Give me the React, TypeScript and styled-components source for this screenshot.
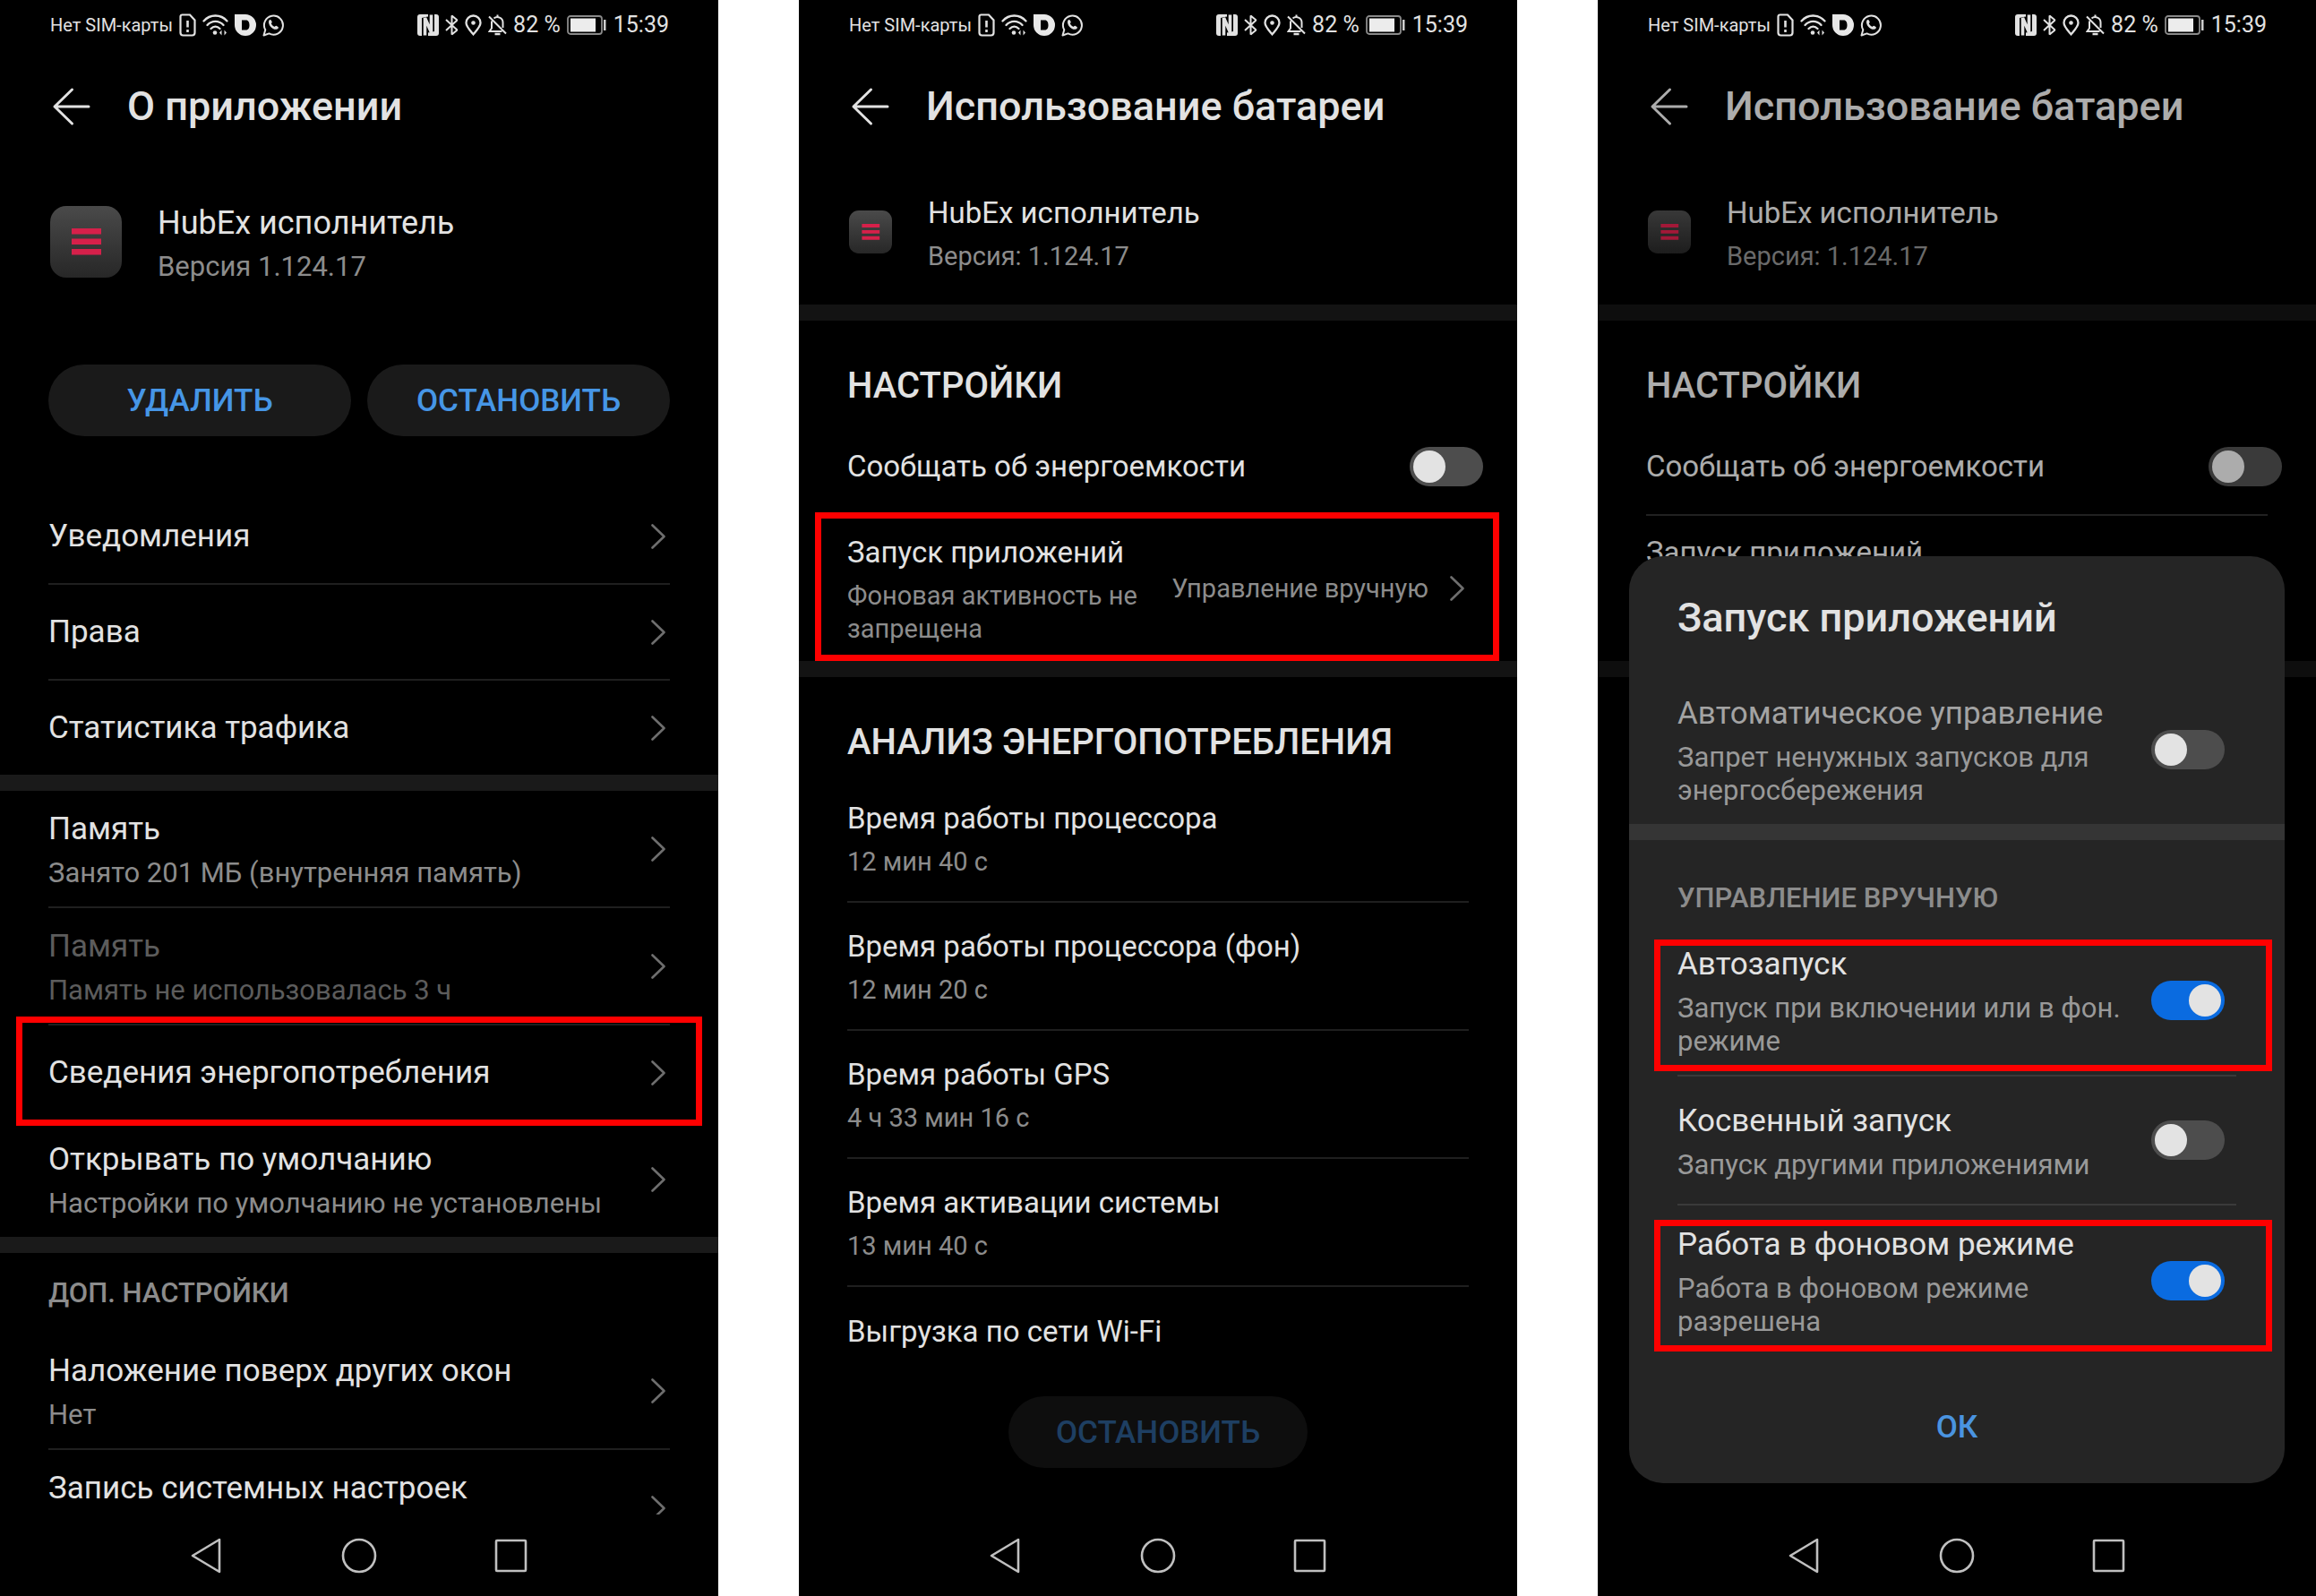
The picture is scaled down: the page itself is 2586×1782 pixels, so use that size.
import React from 'react';
import styled, { createGlobalStyle, css } from 'styled-components';

const GlobalStyle = createGlobalStyle`
  * { box-sizing: border-box; }
  body { margin: 0; background: #fff; font-family: Roboto, "Liberation Sans", sans-serif; }
  h1, h2, p { margin: 0; font-weight: 500; }
  button { margin: 0; border: 0; background: none; font: inherit; color: inherit; text-align: left; cursor: pointer; }
  svg { display: block; flex: none; }
`;

/* ---------- layout ---------- */

const Board = styled.main`
  display: grid;
  grid-template-columns: repeat(3, minmax(0, 1fr));
  gap: 90px;
`;

const PhoneFrame = styled.section`
  position: relative;
  display: flex;
  flex-direction: column;
  height: 100vh;
  overflow: hidden;
  background: #000;
  color: #e2e2e2;
`;

const Content = styled.div<{ $dim?: boolean }>`
  flex: 1;
  min-height: 0;
  overflow: hidden;
  opacity: ${p => (p.$dim ? 0.76 : 1)};
`;

/* ---------- status bar ---------- */

const StatusBar = styled.header`
  flex: none;
  display: flex;
  justify-content: space-between;
  align-items: center;
  height: 56px;
  padding: 0 55px 0 56px;
`;

const StatusGroup = styled.div`
  display: flex;
  align-items: center;
  gap: 7px;
`;

const Carrier = styled.span`
  font-size: 20px;
  line-height: 28px;
`;

const StatusText = styled.span`
  font-size: 25px;
  line-height: 28px;
`;

/* ---------- navigation bar ---------- */

const NavBar = styled.nav`
  flex: none;
  display: flex;
  justify-content: center;
  align-items: center;
  gap: 130px;
  height: 91px;
`;

const NavButton = styled.button`
  padding: 0;
`;

/* ---------- title, app header ---------- */

const TitleBar = styled.div`
  display: flex;
  align-items: center;
  gap: 40px;
  height: 126px;
  padding: 0 58px;
`;

const IconButton = styled.button`
  padding: 0;
`;

const Title = styled.h1`
  font-size: 45px;
  line-height: 52px;
`;

const AppHeader = styled.div<{ $large?: boolean }>`
  display: flex;
  align-items: center;
  gap: 40px;
  height: ${p => (p.$large ? 180 : 158)}px;
  padding: 0 56px 4px;
`;

const Actions = styled.div`
  display: flex;
  gap: 18px;
  padding: 45px 54px 59px;
`;

const Footer = styled.div`
  flex: none;
  display: flex;
  justify-content: center;
  padding: 0 234px 52px;
`;

const PillButton = styled.button`
  flex: 1;
  height: 80px;
  border-radius: 40px;
  background: #1a1a1a;
  color: #4696e6;
  font-size: 35px;
  font-weight: 500;
  text-align: center;

  &:disabled {
    background: #0e0e0e;
    color: #1e3f62;
  }
`;

/* ---------- list ---------- */

const rowBase = css<{ $height: number }>`
  position: relative;
  display: flex;
  align-items: center;
  gap: 24px;
  width: 100%;
  min-height: ${p => p.$height}px;
`;

const LinkRow = styled.button<{ $height: number }>`
  ${rowBase}
  padding: 0 59px 0 54px;
`;

const InfoRow = styled.div<{ $height: number }>`
  ${rowBase}
  padding: 0 54px;
`;

const SwitchRow = styled.label<{ $height: number; $inDialog?: boolean }>`
  ${rowBase}
  padding: 0 ${p => (p.$inDialog ? 67 : 38)}px 0 54px;
`;

const TextBlock = styled.span<{ $padded?: boolean }>`
  flex: 1;
  min-width: 0;
  display: flex;
  flex-direction: column;
  gap: 10px;
  padding-top: ${p => (p.$padded ? 4 : 0)}px;
`;

const Label = styled.span<{ $size?: number; $tone?: string }>`
  font-size: ${p => p.$size ?? 33}px;
  line-height: 40px;
  color: ${p => p.$tone ?? '#e2e2e2'};
`;

const Sub = styled.span<{ $size?: number; $tone?: string }>`
  font-size: ${p => p.$size ?? 29}px;
  line-height: 37px;
  color: ${p => p.$tone ?? '#8c8c8c'};
`;

const Value = styled.span`
  font-size: 29px;
  line-height: 37px;
  white-space: nowrap;
  color: #8c8c8c;
`;

const Divider = styled.div<{ $tone?: string }>`
  height: 2px;
  margin: 0 54px;
  background: ${p => p.$tone ?? '#1f1f1f'};
`;

const Band = styled.div<{ $tone?: string }>`
  height: 18px;
  background: ${p => p.$tone ?? '#1a1a1a'};
`;

const SectionTitle = styled.h2`
  display: flex;
  align-items: center;
  height: 109px;
  padding: 36px 54px 0;
  font-size: 40px;
  line-height: 46px;
`;

const Caption = styled.h2<{ $height: number; $top?: number }>`
  display: flex;
  align-items: center;
  height: ${p => p.$height}px;
  padding: ${p => p.$top ?? 0}px 54px 0;
  font-size: 31px;
  line-height: 37px;
  color: #8c8c8c;
`;

const Highlight = styled.span<{ $inset: string }>`
  position: absolute;
  z-index: 1;
  inset: ${p => p.$inset};
  border: 7px solid #fe0000;
  pointer-events: none;
`;

const Switch = styled.input`
  appearance: none;
  flex: none;
  display: flex;
  width: 82px;
  height: 44px;
  margin: 0;
  padding: 4px;
  border-radius: 22px;
  background: #4d4d4d;

  &::before {
    content: '';
    width: 36px;
    height: 36px;
    border-radius: 50%;
    background: #e3e3e3;
  }

  &:checked {
    justify-content: flex-end;
    background: #0a6be0;
  }
`;

/* ---------- dialog ---------- */

const Dialog = styled.div`
  position: absolute;
  left: 35px;
  right: 35px;
  bottom: 126px;
  border-radius: 38px;
  background: #252525;
`;

const DialogTitle = styled.h2`
  display: flex;
  align-items: center;
  height: 132px;
  padding: 6px 54px 0;
  font-size: 45px;
  line-height: 52px;
`;

const DialogFooter = styled.div`
  display: flex;
  justify-content: center;
  align-items: center;
  height: 143px;
  padding-top: 18px;
`;

const TextButton = styled.button`
  padding: 8px 24px;
  font-size: 35px;
  font-weight: 500;
  line-height: 40px;
  color: #4a94e0;
`;

/* ---------- drawings ---------- */

const Chevron = () => (
  <svg width="16" height="28" viewBox="0 0 16 28" fill="none" stroke="#6e6e6e" strokeWidth="2.6" strokeLinecap="round" strokeLinejoin="round">
    <path d="M1.5 1.5 14.5 14 1.5 26.5" />
  </svg>
);

const BackArrow = () => (
  <svg width="44" height="44" viewBox="0 0 44 44" fill="none" stroke="#e2e2e2" strokeWidth="3" strokeLinecap="round" strokeLinejoin="round">
    <path d="M22.500 3 3 22l19.500 19M3 22h38" />
  </svg>
);

const AppIcon = ({ size }: { size: number }) => (
  <svg width={size} height={size} viewBox="0 0 80 80">
    <defs>
      <linearGradient id="tile" x1="0" y1="0" x2="0" y2="1">
        <stop offset="0" stopColor="#4a4a4a" />
        <stop offset="1" stopColor="#272727" />
      </linearGradient>
    </defs>
    <rect width="80" height="80" rx="18" fill="url(#tile)" />
    <path d="M24 25h33v6.500H24zM24 36.500h33V43H24zM24 48h33v6.500H24z" fill="#d6204a" />
  </svg>
);

const SimIcon = () => (
  <svg width="19" height="26" viewBox="0 0 19 26" fill="none" stroke="#e2e2e2" strokeWidth="2.2">
    <path d="M3.500 1.500H12l5.500 6v14a3 3 0 0 1-3 3h-10a3 3 0 0 1-3-3v-18a2 2 0 0 1 2-2z" />
    <path d="M9.500 8v7.500M9.500 18v3" strokeWidth="2.600" />
  </svg>
);

const WifiIcon = () => (
  <svg width="29" height="26" viewBox="0 0 29 26" fill="none" stroke="#e2e2e2" strokeWidth="2.300" strokeLinecap="round">
    <path d="M1.500 8.500C8.500.5 20.500.5 27.500 8.500M5.500 13c5-5.500 13-5.500 18 0M9.500 17c3-3 7-3 10 0" />
    <circle cx="14" cy="21.500" r="2.300" fill="#e2e2e2" stroke="none" />
    <path d="m21.500 18.500-2.500 3 2.500 3zM24.500 18.500l2.500 3-2.500 3z" fill="#e2e2e2" stroke="none" />
  </svg>
);

const BadgeIcon = () => (
  <svg width="24" height="24" viewBox="0 0 24 24">
    <path fillRule="evenodd" fill="#e8e8e8" d="M0 0h12a12 12 0 0 1 12 12 12 12 0 0 1-12 12A12 12 0 0 1 0 12zM8 6.500v11h4.500c3 0 4-2.500 4-5.500s-1-5.500-4-5.500z" />
  </svg>
);

const ChatIcon = () => (
  <svg width="24" height="26" viewBox="0 0 24 26">
    <path d="M1.500 24.500l1.800-6.200a10.500 10.500 0 1 1 4.200 4.100z" fill="none" stroke="#e2e2e2" strokeWidth="2" strokeLinejoin="round" />
    <path d="M7.200 8.200c.7-1.300 1.900-1.500 2.500-.6l1 2c.3.800-.9 1.500-.8 2 .8 1.500 2 2.600 3.500 3.200.6.200 1.300-1.300 2-1l2.100 1.100c.8.600.1 2.200-1.100 2.700-4.300 1.500-10.600-4.600-9.200-9.400z" fill="#e2e2e2" />
  </svg>
);

const NfcIcon = () => (
  <svg width="24" height="24" viewBox="0 0 24 24" fill="none">
    <rect width="24" height="24" rx="3" fill="#e2e2e2" />
    <path d="M8.500 26V4l7 15V-2" stroke="#000" strokeWidth="7" />
    <path d="M8.500 23.500V4l7 16V.5" stroke="#e2e2e2" strokeWidth="3.600" />
  </svg>
);

const BluetoothIcon = () => (
  <svg width="15" height="24" viewBox="0 0 15 24" fill="none" stroke="#e2e2e2" strokeWidth="2" strokeLinejoin="bevel">
    <path d="M1 6 13.500 17.500l-6 5V1.500l6 5L1 18" />
  </svg>
);

const PinIcon = () => (
  <svg width="19" height="24" viewBox="0 0 19 24">
    <path d="M9.500 22.300C5 17 1.500 13.500 1.500 9.500a8 8 0 0 1 16 0c0 4-3.500 7.500-8 12.800z" fill="none" stroke="#e2e2e2" strokeWidth="2.300" />
    <circle cx="9.500" cy="9.500" r="2.300" fill="#e2e2e2" />
  </svg>
);

const BellOffIcon = () => (
  <svg width="21" height="24" viewBox="0 0 21 24" fill="none" stroke="#e2e2e2" strokeWidth="2">
    <path d="M1 2.500 20 21.500M4 7.500v8L1.500 19h14M6.500 4.500C10 1.500 16.500 3.500 16.500 9v6M10.500 3V.5" />
    <path d="M7.500 22h6" strokeWidth="2.500" />
  </svg>
);

const BatteryIcon = () => (
  <svg width="45" height="22" viewBox="0 0 45 22">
    <rect x="1" y="1" width="38" height="20" rx="3" fill="none" stroke="#8a8a8a" strokeWidth="1.800" />
    <rect x="4" y="3.500" width="28" height="15" fill="#ececec" />
    <rect x="41" y="5" width="2.500" height="12" fill="#cfcfcf" />
  </svg>
);

const navStroke = { fill: 'none', stroke: '#c0c0c0', strokeWidth: 2.6, strokeLinejoin: 'round' as const };

/* ---------- shared pieces ---------- */

const PhoneStatus = () => (
  <StatusBar>
    <StatusGroup>
      <Carrier>Нет SIM-карты</Carrier>
      <SimIcon />
      <WifiIcon />
      <BadgeIcon />
      <ChatIcon />
    </StatusGroup>
    <StatusGroup>
      <NfcIcon />
      <BluetoothIcon />
      <PinIcon />
      <BellOffIcon />
      <StatusText>82 %</StatusText>
      <BatteryIcon />
      <StatusText>15:39</StatusText>
    </StatusGroup>
  </StatusBar>
);

const PhoneNav = () => (
  <NavBar>
    <NavButton aria-label="Назад">
      <svg width="40" height="40" viewBox="0 0 40 40" {...navStroke}><path d="M34 2v36L4 20z" /></svg>
    </NavButton>
    <NavButton aria-label="Главный экран">
      <svg width="40" height="40" viewBox="0 0 40 40" {...navStroke}><circle cx="20" cy="20" r="18" /></svg>
    </NavButton>
    <NavButton aria-label="Недавние">
      <svg width="40" height="40" viewBox="0 0 40 40" {...navStroke}><rect x="3" y="3" width="33" height="34" rx="1" /></svg>
    </NavButton>
  </NavBar>
);

const Header = ({ children }: { children: string }) => (
  <TitleBar>
    <IconButton aria-label="Назад"><BackArrow /></IconButton>
    <Title>{children}</Title>
  </TitleBar>
);

type LinkItemProps = { label: string; sub?: string; muted?: boolean; value?: string; height?: number; highlight?: string; compact?: boolean };

const LinkItem = ({ label, sub, muted, value, height, highlight, compact }: LinkItemProps) => (
  <LinkRow $height={height ?? (sub ? 129 : 105)}>
    <TextBlock $padded={!!sub}>
      <Label $size={compact ? 33 : 35} $tone={muted ? '#5c5c5c' : undefined}>{label}</Label>
      {sub && <Sub $size={compact ? 29 : 31} $tone={muted ? '#5c5c5c' : undefined}>{sub}</Sub>}
    </TextBlock>
    {value && <Value>{value}</Value>}
    <Chevron />
    {highlight && <Highlight $inset={highlight} />}
  </LinkRow>
);

type SwitchItemProps = { label: string; sub?: string; height: number; on?: boolean; muted?: boolean; inDialog?: boolean; highlight?: string };

const SwitchItem = ({ label, sub, height, on, muted, inDialog, highlight }: SwitchItemProps) => (
  <SwitchRow $height={height} $inDialog={inDialog}>
    <TextBlock $padded={!!sub}>
      <Label $size={inDialog ? 35 : 33} $tone={muted ? '#a3a3a3' : undefined}>{label}</Label>
      {sub && <Sub $size={31} $tone="#999">{sub}</Sub>}
    </TextBlock>
    <Switch type="checkbox" role="switch" defaultChecked={on} />
    {highlight && <Highlight $inset={highlight} />}
  </SwitchRow>
);

const BatteryTop = ({ highlight }: { highlight?: string }) => (
  <>
    <Header>Использование батареи</Header>
    <AppHeader>
      <AppIcon size={48} />
      <TextBlock $padded>
        <Label>HubEx исполнитель</Label>
        <Sub>Версия: 1.124.17</Sub>
      </TextBlock>
    </AppHeader>
    <Band $tone="#131313" />
    <SectionTitle>НАСТРОЙКИ</SectionTitle>
    <SwitchItem label="Сообщать об энергоемкости" height={107} />
    <Divider $tone="#2c2c2c" />
    <LinkItem
      compact
      label="Запуск приложений"
      sub="Фоновая активность не запрещена"
      value="Управление вручную"
      height={162}
      highlight={highlight}
    />
    <Band $tone="#131313" />
  </>
);

const usage = [
  ['Время работы процессора', '12 мин 40 с'],
  ['Время работы процессора (фон)', '12 мин 20 с'],
  ['Время работы GPS', '4 ч 33 мин 16 с'],
  ['Время активации системы', '13 мин 40 с'],
];

/* ---------- screens ---------- */

const AboutScreen = () => (
  <PhoneFrame>
    <PhoneStatus />
    <Content>
      <Header>О приложении</Header>
      <AppHeader $large>
        <AppIcon size={80} />
        <TextBlock $padded>
          <Label $size={36}>HubEx исполнитель</Label>
          <Sub $size={31}>Версия 1.124.17</Sub>
        </TextBlock>
      </AppHeader>
      <Actions>
        <PillButton>УДАЛИТЬ</PillButton>
        <PillButton>ОСТАНОВИТЬ</PillButton>
      </Actions>
      <LinkItem label="Уведомления" />
      <Divider />
      <LinkItem label="Права" />
      <Divider />
      <LinkItem label="Статистика трафика" />
      <Band />
      <LinkItem label="Память" sub="Занято 201 МБ (внутренняя память)" />
      <Divider />
      <LinkItem label="Память" sub="Память не использовалась 3 ч" muted />
      <Divider />
      <LinkItem label="Сведения энергопотребления" highlight="-10px 18px -7px 18px" />
      <Divider />
      <LinkItem label="Открывать по умолчанию" sub="Настройки по умолчанию не установлены" />
      <Band />
      <Caption $height={89}>ДОП. НАСТРОЙКИ</Caption>
      <LinkItem label="Наложение поверх других окон" sub="Нет" />
      <Divider />
      <LinkItem label="Запись системных настроек" sub={'\u00a0'} />
    </Content>
    <PhoneNav />
  </PhoneFrame>
);

const BatteryScreen = () => (
  <PhoneFrame>
    <PhoneStatus />
    <Content>
      <BatteryTop highlight="-4px 20px 0 18px" />
      <SectionTitle>АНАЛИЗ ЭНЕРГОПОТРЕБЛЕНИЯ</SectionTitle>
      {usage.map(([label, time]) => (
        <React.Fragment key={label}>
          <InfoRow $height={141}>
            <TextBlock $padded>
              <Label>{label}</Label>
              <Sub>{time}</Sub>
            </TextBlock>
          </InfoRow>
          <Divider />
        </React.Fragment>
      ))}
      <InfoRow $height={99}>
        <TextBlock><Label>Выгрузка по сети Wi-Fi</Label></TextBlock>
      </InfoRow>
    </Content>
    <Footer>
      <PillButton disabled>ОСТАНОВИТЬ</PillButton>
    </Footer>
    <PhoneNav />
  </PhoneFrame>
);

const LaunchScreen = () => (
  <PhoneFrame>
    <PhoneStatus />
    <Content $dim inert>
      <BatteryTop />
    </Content>
    <PhoneNav />
    <Dialog role="dialog" aria-label="Запуск приложений">
      <DialogTitle>Запуск приложений</DialogTitle>
      <SwitchItem inDialog muted height={167} label="Автоматическое управление" sub="Запрет ненужных запусков для энергосбережения" />
      <Band $tone="#353535" />
      <Caption $height={95} $top={34}>УПРАВЛЕНИЕ ВРУЧНУЮ</Caption>
      <SwitchItem inDialog on height={167} label="Автозапуск" sub="Запуск при включении или в фон. режиме" highlight="16px 14px 4px 28px" />
      <Divider $tone="#3a3a3a" />
      <SwitchItem inDialog height={142} label="Косвенный запуск" sub="Запуск другими приложениями" />
      <Divider $tone="#3a3a3a" />
      <SwitchItem inDialog on height={167} label="Работа в фоновом режиме" sub="Работа в фоновом режиме разрешена" highlight="16px 14px 4px 28px" />
      <DialogFooter>
        <TextButton>ОК</TextButton>
      </DialogFooter>
    </Dialog>
  </PhoneFrame>
);

export default function App() {
  return (
    <>
      <GlobalStyle />
      <Board>
        <AboutScreen />
        <BatteryScreen />
        <LaunchScreen />
      </Board>
    </>
  );
}
